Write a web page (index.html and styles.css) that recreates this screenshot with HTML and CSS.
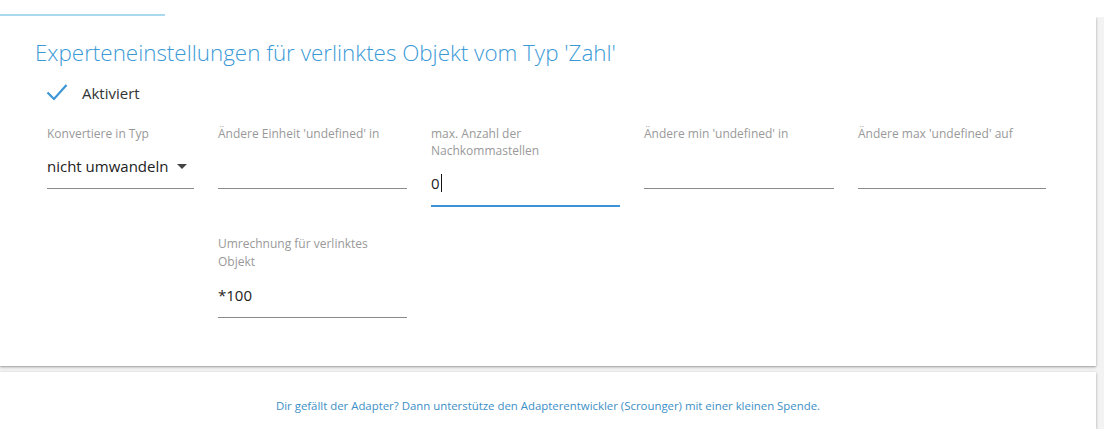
FILE: index.html
```html
<!DOCTYPE html>
<html lang="de">
<head>
<meta charset="utf-8">
<title>Experteneinstellungen</title>
<link rel="stylesheet" href="styles.css">
</head>
<body>
<div class="tabbar"><div class="indicator"></div></div>
<div class="area">
  <section class="card main">
    <h1 class="title">Experteneinstellungen für verlinktes Objekt vom Typ 'Zahl'</h1>
    <div class="check">
      <svg class="checkmark" width="22" height="20" viewBox="0 0 22 20"><path d="M1.5 9.5 L8 16 L20.5 2" fill="none" stroke="#3b96d6" stroke-width="2.2"/></svg>
      <span class="check-label">Aktiviert</span>
    </div>
    <div class="grid">
      <div class="field">
        <div class="label">Konvertiere in Typ</div>
        <div class="value select">nicht umwandeln <span class="arrow"></span></div>
      </div>
      <div class="field">
        <div class="label">Ändere Einheit 'undefined' in</div>
        <div class="value"></div>
      </div>
      <div class="field">
        <div class="label">max. Anzahl der<br>Nachkommastellen</div>
        <div class="value focused">0<span class="caret"></span></div>
      </div>
      <div class="field">
        <div class="label">Ändere min 'undefined' in</div>
        <div class="value"></div>
      </div>
      <div class="field">
        <div class="label">Ändere max 'undefined' auf</div>
        <div class="value"></div>
      </div>
      <div class="field col2">
        <div class="label">Umrechnung für verlinktes<br>Objekt</div>
        <div class="value">*100</div>
      </div>
    </div>
  </section>
  <section class="card footer">
    <p class="donate">Dir gefällt der Adapter? Dann unterstütze den Adapterentwickler (Scrounger) mit einer kleinen Spende.</p>
  </section>
</div>
</body>
</html>
```

FILE: styles.css
```css
html, body {
  margin: 0;
  padding: 0;
  background: #ffffff;
  font-family: "Open Sans", "Noto Sans", sans-serif;
  overflow: hidden;
}
.tabbar {
  height: 17px;
  display: flex;
  align-items: flex-end;
  background: #fff;
}
.indicator {
  width: 165px;
  height: 2px;
  background: #a9d9ef;
  margin-bottom: 1px;
}
.area {
  background: #f3f3f3;
  padding-right: 8px;
  display: flex;
  flex-direction: column;
  gap: 6px;
  height: 412px;
  overflow: hidden;
}
.card {
  flex-shrink: 0;
  background: #fff;
  box-shadow: 0 1px 3px rgba(0,0,0,0.28), 0 1px 1px rgba(0,0,0,0.1);
}
.main {
  height: 349px;
  box-sizing: border-box;
  padding: 20px 0 0 35px;
}
.title {
  margin: 0;
  font-weight: 300;
  font-size: 22.4px;
  line-height: 32px;
  color: #3b9ad6;
}
.check {
  display: flex;
  align-items: center;
  margin: 10px 0 0 11px;
  height: 28px;
}
.checkmark {
  display: block;
  margin-right: 14px;
}
.check-label {
  font-size: 15px;
  color: #333;
}
.grid {
  display: grid;
  grid-template-columns: 147px 189px 189px 190px 188px;
  column-gap: 24px;
  row-gap: 28px;
  margin: 18px 0 0 12px;
  align-items: start;
}
.col2 {
  grid-column: 2;
}
.col2 .label {
  line-height: 18px;
}
.label {
  font-size: 12px;
  line-height: 17px;
  color: #999;
}
.value {
  height: 28px;
  margin-top: 10px;
  padding-bottom: 8px;
  border-bottom: 1px solid #8a8a8a;
  font-size: 15px;
  line-height: 28px;
  color: #222;
  box-sizing: content-box;
}
.select {
  display: flex;
  align-items: center;
  gap: 9px;
}
.arrow {
  width: 0;
  height: 0;
  border-left: 5px solid transparent;
  border-right: 5px solid transparent;
  border-top: 5px solid #444;
}
.focused {
  border-bottom: 2px solid #3b92d6;
  display: flex;
  align-items: center;
}
.caret {
  display: inline-block;
  width: 1px;
  height: 18px;
  background: #111;
  margin-left: 1px;
}
.footer {
  height: 57px;
  padding-top: 26px;
  box-sizing: border-box;
}
.donate {
  margin: 0;
  text-align: center;
  font-size: 11.4px;
  color: #3c8fc6;
}
```
